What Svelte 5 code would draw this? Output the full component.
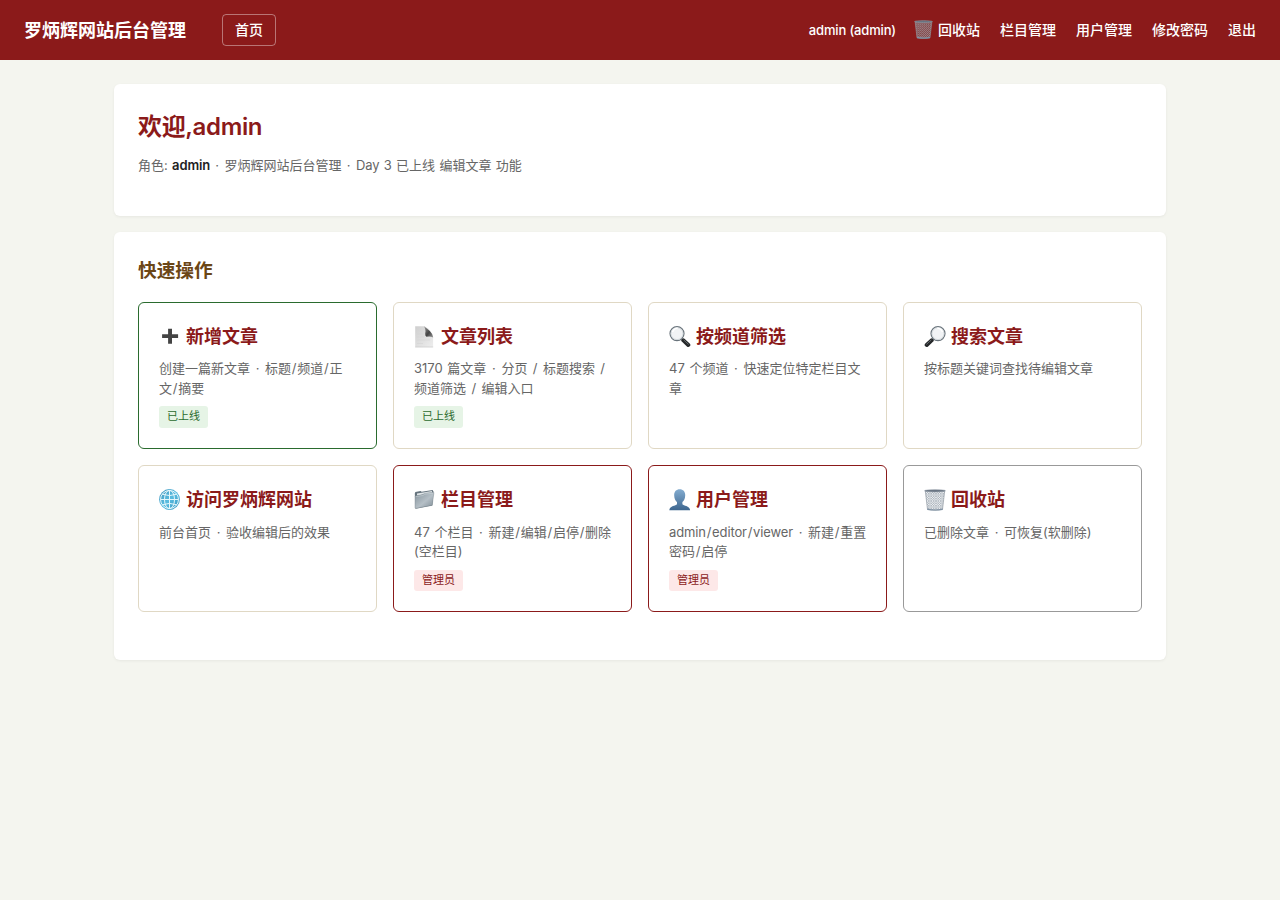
<script lang="ts">
  type Card = {
    icon: string;
    title: string;
    desc: string;
    badge?: string;
    kind?: string;
  };

  const user = { name: 'admin', role: 'admin' };
  const siteName = '罗炳辉网站后台管理';
  const links: string[] = ['栏目管理', '用户管理', '修改密码', '退出'];

  const cards: Card[] = [
    { icon: 'plus', title: '新增文章', desc: '创建一篇新文章 · 标题/频道/正文/摘要', badge: '已上线', kind: 'primary' },
    { icon: 'page', title: '文章列表', desc: '3170 篇文章 · 分页 / 标题搜索 / 频道筛选 / 编辑入口', badge: '已上线' },
    { icon: 'zoom-left', title: '按频道筛选', desc: '47 个频道 · 快速定位特定栏目文章' },
    { icon: 'zoom-right', title: '搜索文章', desc: '按标题关键词查找待编辑文章' },
    { icon: 'globe', title: '访问罗炳辉网站', desc: '前台首页 · 验收编辑后的效果' },
    { icon: 'folder', title: '栏目管理', desc: '47 个栏目 · 新建/编辑/启停/删除(空栏目)', badge: '管理员', kind: 'admin' },
    { icon: 'user', title: '用户管理', desc: 'admin/editor/viewer · 新建/重置密码/启停', badge: '管理员', kind: 'admin' },
    { icon: 'trash', title: '回收站', desc: '已删除文章 · 可恢复(软删除)', kind: 'muted' }
  ];

  // separators and latin words get their own tracking next to the Chinese text
  function split(text: string): { text: string; cls: string }[] {
    return text
      .split(/([·/]|[a-zA-Z]+)/)
      .filter((t) => t !== '')
      .map((t) => ({ text: t, cls: t === '·' ? 'dot' : t === '/' ? 'slash' : /^[a-z]/i.test(t) ? 'latin' : '' }));
  }
</script>

{#snippet spaced(text: string)}
  {#each split(text) as part}{#if part.cls}<span class={part.cls}>{part.text}</span>{:else}{part.text}{/if}{/each}
{/snippet}

{#snippet trash(id: string, light: boolean)}
  <svg viewBox="0 0 22 22">
    <defs>
      <pattern id={id} width="2.4" height="2.4" patternUnits="userSpaceOnUse">
        <path d="M0 0L2.4 2.4M2.4 0L0 2.4" stroke={light ? '#8d98a3' : '#a4979c'} stroke-width=".5" />
      </pattern>
    </defs>
    <path d="M1.3 2h19.4l-2.2 18.4q-7.5 1.6-15 0z" fill={light ? '#f1f3f5' : '#84484a'} />
    <path d="M1.3 2h19.4l-2.2 18.4q-7.5 1.6-15 0z" fill="url(#{id})" stroke="#929ba4" stroke-width=".7" />
    <path d="M3.2 19.5q7.8 1.8 15.6 0l-.2 1.5q-7.6 1.2-15.2 0z" fill="#7f91a3" />
    <ellipse cx="11" cy="1.8" rx="10.4" ry="1.1" fill="#65717f" stroke="#8e99a4" stroke-width=".6" />
  </svg>
{/snippet}

{#snippet icon(name: string)}
  {#if name === 'plus'}
    <svg viewBox="0 0 22 22"><path d="M9.1 2.7h3.9v5.5h6.1v3.9H13v5.7H9.1v-5.7H3.1V8.2h6z" fill="#444" /></svg>
  {:else if name === 'page'}
    <svg viewBox="0 0 22 22">
      <defs>
        <linearGradient id="sheet" x2="1" y2="1"><stop stop-color="#cfcfcf" /><stop offset="1" stop-color="#eee" /></linearGradient>
        <linearGradient id="fold" x2="1" y2="1"><stop stop-color="#999" /><stop offset=".55" stop-color="#444" /><stop offset="1" stop-color="#999" /></linearGradient>
      </defs>
      <path d="M1.2.3h9.3q6.8 3.4 8.6 10.6v10.4H1.2z" fill="url(#sheet)" />
      <path d="M9.8.3q2.4 3.1 1.4 7.3-.3 2.2 1.2 3.2 4-.9 6.8.8-.1-3.6-3.7-6.9Q12.5 2 9.8.3z" fill="url(#fold)" />
      <path d="M3 8h6M3 11h7M3 14h13M3 17.5h6" stroke="#d0d0d0" stroke-width=".5" />
      <path d="M1.2 21h18" stroke="#c8c8c8" stroke-width=".6" />
    </svg>
  {:else if name === 'zoom-left' || name === 'zoom-right'}
    <svg viewBox="0 0 22 22" class:flip={name === 'zoom-right'}>
      <path d="M12.5 13l2.5 2.5" stroke="#777" stroke-width="2" />
      <path d="M14.4 14.4l4.9 4.6" stroke="#242729" stroke-width="4" stroke-linecap="round" />
      <path d="M14.9 14.1l4.4 4.1" stroke="#71777b" stroke-width=".8" stroke-linecap="round" />
      <circle cx="8" cy="7.6" r="7" fill="#f1f3f5" stroke="#69737b" stroke-width="1.2" />
      <circle cx="8" cy="7.6" r="6" fill="none" stroke="#c7ced3" stroke-width=".7" />
      <path d="M3.5 6Q5 2.4 8.7 2.1" fill="none" stroke="#fff" stroke-width="1.5" />
    </svg>
  {:else if name === 'globe'}
    <svg viewBox="0 0 22 22">
      <defs><linearGradient id="sea" x1="0" y1="0" x2="1" y2="1"><stop stop-color="#4293bb" /><stop offset=".5" stop-color="#58bce0" /><stop offset="1" stop-color="#3795bf" /></linearGradient></defs>
      <circle cx="10.5" cy="10.5" r="10.4" fill="url(#sea)" />
      <g fill="none" stroke="#e4f6fb" stroke-width="1">
        <circle cx="10.5" cy="10.5" r="9" />
        <path d="M10.5 1v19M1.5 10.5h18M3.2 5.2q7.3 2.8 14.6 0M3.2 15.8q7.3-2.8 14.6 0" />
        <ellipse cx="10.5" cy="10.5" rx="5" ry="9.2" />
      </g>
    </svg>
  {:else if name === 'folder'}
    <svg viewBox="0 0 22 22">
      <defs><linearGradient id="cover" x2="1" y2="1"><stop stop-color="#84929b" /><stop offset=".55" stop-color="#b5bfc6" /><stop offset="1" stop-color="#7d8b95" /></linearGradient></defs>
      <path d="M.8 4.5l.6-1.5 5.1-1 1.2.8 10.9-1.8.9 1.6-1.2 13.8L1.5 19.8z" fill="#65737d" />
      <path d="M3 4.4l15-2.3v2L3 6.5z" fill="#dfe4e7" />
      <path d="M1 6.9l7.6-1.1 1.7-1.4 9.1-1.2q.6 0 .5.8l-1.7 12.3-16.5 3.1q-.7 0-.7-.8z" fill="url(#cover)" stroke="#78858e" stroke-width=".4" />
      <path d="M1.8 7.5l7.1-1 1.7-1.3 8.5-1.1" fill="none" stroke="#d5dce0" stroke-width=".5" />
    </svg>
  {:else if name === 'user'}
    <svg viewBox="0 0 22 22">
      <defs><linearGradient id="bust" x2="0" y2="1"><stop stop-color="#83acd0" /><stop offset="1" stop-color="#3d668f" /></linearGradient></defs>
      <path d="M10.7.2c3.6 0 5.7 2.6 5.5 6.2-.1 3.2-1.2 5.5-2.8 6.7v2.2c1.3 1.7 7.3 1.4 7.7 6H.3c.4-4.6 6.4-4.3 7.7-6v-2.2C6.4 11.9 5.3 9.6 5.2 6.4 5 2.8 7.1.2 10.7.2z" fill="url(#bust)" />
    </svg>
  {:else}
    {@render trash('mesh-card', true)}
  {/if}
{/snippet}

<header class="topbar">
  <div class="brand">{siteName}</div>
  <button class="home">首页</button>
  <nav>
    <span class="account">{user.name} ({user.role})</span>
    <a class="recycle" href="#trash">{@render trash('mesh-nav', false)}<span>回收站</span></a>
    {#each links as link}
      <a href="#{link}">{link}</a>
    {/each}
  </nav>
</header>

<main>
  <section class="panel welcome">
    <h1>欢迎,{user.name}</h1>
    <p>角色: <strong>{user.role}</strong> {@render spaced(`· ${siteName} · Day 3 已上线 编辑文章 功能`)}</p>
  </section>

  <section class="panel actions">
    <h2>快速操作</h2>
    <div class="grid">
      {#each cards as card}
        <a class="card {card.kind ?? ''}" href="#{card.icon}">
          <h3>{@render icon(card.icon)}<span>{card.title}</span></h3>
          <p>{@render spaced(card.desc)}</p>
          {#if card.badge}
            <span class="badge" class:red={card.kind === 'admin'}>{card.badge}</span>
          {/if}
        </a>
      {/each}
    </div>
  </section>
</main>

<style>
  :global(body) {
    margin: 0;
    background: #f4f5ef;
    color: #222;
    font-family: Inter, "Noto Sans CJK SC", sans-serif;
  }

  a {
    color: inherit;
    text-decoration: none;
  }

  h1,
  h2,
  h3,
  p {
    margin: 0;
  }

  svg {
    display: block;
    flex: none;
  }

  .topbar {
    display: flex;
    align-items: center;
    height: 60px;
    padding: 0 24px;
    box-sizing: border-box;
    background: #8b1a1a;
    color: #fff;
  }

  .brand {
    margin-right: 36px;
    padding-bottom: 2px;
    font-size: 18px;
    font-weight: 700;
  }

  .home {
    width: 54px;
    height: 32px;
    padding: 0 0 2px;
    border: 1px solid rgba(255, 255, 255, 0.4);
    border-radius: 4px;
    background: none;
    color: #fff;
    font: 500 14px Inter, "Noto Sans CJK SC", sans-serif;
  }

  nav {
    display: flex;
    align-items: center;
    gap: 20px;
    margin-left: auto;
    padding-bottom: 2px;
    font-size: 14px;
    font-weight: 500;
  }

  .account {
    padding-top: 2px;
    font-size: 13px;
    letter-spacing: -0.15px;
  }

  .recycle {
    display: flex;
    align-items: center;
    gap: 5px;
    margin-left: -2px;
  }

  .recycle svg {
    width: 19px;
    height: 19px;
  }

  main {
    max-width: 1052px;
    margin: 24px auto;
  }

  .panel {
    box-sizing: border-box;
    margin-bottom: 16px;
    padding: 24px;
    border-radius: 6px;
    background: #fff;
    box-shadow: 0 1px 3px rgba(0, 0, 0, 0.06);
  }

  .welcome {
    height: 132px;
  }

  h1 {
    padding-top: 1px;
    color: #8b1a1a;
    font-size: 24px;
    font-weight: 600;
    line-height: 36px;
    letter-spacing: -0.35px;
  }

  p {
    color: #666;
    font-size: 13px;
    line-height: 19.5px;
    word-spacing: 1px;
  }

  .welcome p {
    margin-top: 10px;
    line-height: 20px;
    word-spacing: 0.7px;
  }

  .welcome strong {
    color: #222;
    font-weight: 600;
    letter-spacing: -0.15px;
  }

  .dot {
    margin: 0 1px;
  }

  .slash {
    margin: 0 0.75px;
  }

  .latin {
    letter-spacing: -0.12px;
  }

  .actions {
    height: 428px;
  }

  h2 {
    margin-bottom: 17px;
    padding-top: 1px;
    color: #6b4616;
    font-size: 18.7px;
    font-weight: 700;
    line-height: 28px;
  }

  .grid {
    display: grid;
    grid-template-columns: repeat(4, 1fr);
    grid-auto-rows: 147.2px;
    gap: 16px;
  }

  .card {
    box-sizing: border-box;
    padding: 20px;
    border: 1px solid #e0d8c4;
    border-radius: 6px;
  }

  .card.primary {
    border-color: #2a6b2e;
  }

  .card.admin {
    border-color: #8b1a1a;
  }

  .card.muted {
    border-color: #999;
  }

  h3 {
    display: flex;
    align-items: center;
    gap: 5px;
    color: #8b1a1a;
    font-size: 18px;
    font-weight: 700;
    line-height: 27px;
  }

  h3 svg {
    width: 22px;
    height: 22px;
  }

  .flip {
    transform: scaleX(-1);
  }

  .card p {
    margin: 9.45px -1px 0 0;
  }

  .badge {
    display: inline-block;
    margin-top: 8px;
    padding: 0 8px;
    border-radius: 3px;
    background: #e6f4e6;
    color: #2a6b2e;
    font-size: 11px;
    line-height: 21.5px;
  }

  .badge.red {
    background: #fde8e8;
    color: #8b1a1a;
  }
</style>
